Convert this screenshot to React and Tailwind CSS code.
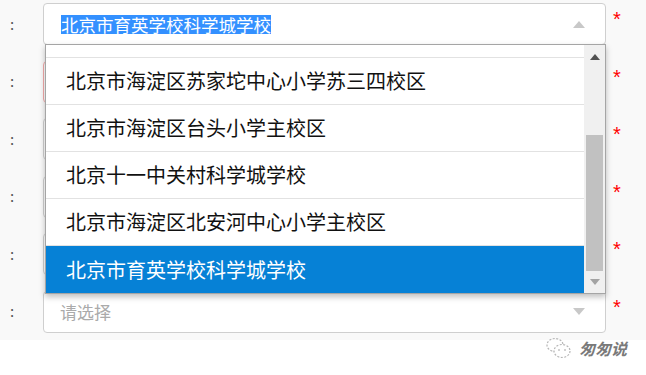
import React from 'react'

const font = { fontFamily: '"Microsoft YaHei", "Noto Sans CJK SC", sans-serif' }

const opciones = [
  '北京市海淀区苏家坨中心小学苏三四校区',
  '北京市海淀区台头小学主校区',
  '北京十一中关村科学城学校',
  '北京市海淀区北安河中心小学主校区',
]

function Fila({ children, error }) {
  return (
    <div className="flex h-[57.5px] items-start">
      <div className="w-[43px] h-[42px] flex items-center pl-[10px] text-[15px] text-[#555]">:</div>
      <div
        className={
          'w-[563px] h-[42px] bg-white border rounded-[4px] flex items-center justify-between pl-[16px] pr-[20px] ' +
          (error ? 'border-[#f2a9a9]' : 'border-[#cfcfcf]')
        }
      >
        {children}
      </div>
      <div className="flex-1 h-[42px] flex items-start pt-[6px] pl-[7px] text-[20px] leading-[20px] text-[#ff0000]" style={{ fontFamily: '"Liberation Sans", sans-serif' }}>*</div>
    </div>
  )
}

function Flecha({ arriba, color = '#c8c8c8' }) {
  return (
    <svg width="12" height="7" viewBox="0 0 12 7">
      {arriba ? <path d="M0 7 L6 0 L12 7 Z" fill={color} /> : <path d="M0 0 L6 7 L12 0 Z" fill={color} />}
    </svg>
  )
}

export default function App() {
  return (
    <div className="w-[646px] h-[375px] bg-white relative overflow-hidden" style={font}>
      <div className="bg-[#f9f9f9] h-[340px] pt-[3px]">
        <Fila>
          <span className="text-[17.5px] leading-[19px] bg-[#3390ff] text-white ml-[1px]">北京市育英学校科学城学校</span>
          <Flecha arriba />
        </Fila>
        <Fila error>
          <span />
          <Flecha />
        </Fila>
        <Fila>
          <span />
          <Flecha />
        </Fila>
        <Fila>
          <span />
          <Flecha />
        </Fila>
        <Fila>
          <span />
          <Flecha />
        </Fila>
        <Fila>
          <span className="text-[17px] text-[#aaaaaa]">请选择</span>
          <Flecha />
        </Fila>
      </div>

      <div className="absolute left-[45px] top-[44px] w-[561px] h-[250px] bg-white border border-[#a5a5a5] shadow-[0_3px_6px_rgba(0,0,0,0.25)] flex">
        <div className="flex-1 flex flex-col">
          <div className="h-[13px] border-b border-[#e2e2e2]" />
          {opciones.map((o) => (
            <div key={o} className="h-[47px] border-b border-[#e2e2e2] flex items-center pl-[20px] text-[20px] text-[#111]">
              {o}
            </div>
          ))}
          <div className="flex-1 bg-[#0681d6] flex items-center pl-[20px] text-[20px] text-white">
            北京市育英学校科学城学校
          </div>
        </div>
        <div className="w-[21px] bg-[#f0f0f0] flex flex-col items-center">
          <div className="h-[24px] flex items-center justify-center">
            <svg width="10" height="6" viewBox="0 0 10 6"><path d="M0 6 L5 0 L10 6 Z" fill="#505050" /></svg>
          </div>
          <div className="h-[66px]" />
          <div className="w-[17px] h-[136px] bg-[#c1c1c1]" />
          <div className="flex-1 flex items-center justify-center">
            <svg width="10" height="6" viewBox="0 0 10 6"><path d="M0 0 L5 6 L10 0 Z" fill="#a3a3a3" /></svg>
          </div>
        </div>
      </div>

      <div className="absolute left-[546px] top-[336px] flex items-center gap-[7px]">
        <svg width="26" height="22" viewBox="0 0 26 22" fill="none" stroke="#b5b5b5" strokeWidth="1.2" strokeDasharray="2 1.5">
          <ellipse cx="9" cy="8" rx="8" ry="6.5" />
          <ellipse cx="16" cy="14" rx="8" ry="6.5" fill="white" />
          <circle cx="13" cy="13" r="0.8" fill="#999" stroke="none" />
          <circle cx="19" cy="13" r="0.8" fill="#999" stroke="none" />
        </svg>
        <span className="text-[16px] italic font-bold text-[#7a7a7a]">匆匆说</span>
      </div>
    </div>
  )
}
